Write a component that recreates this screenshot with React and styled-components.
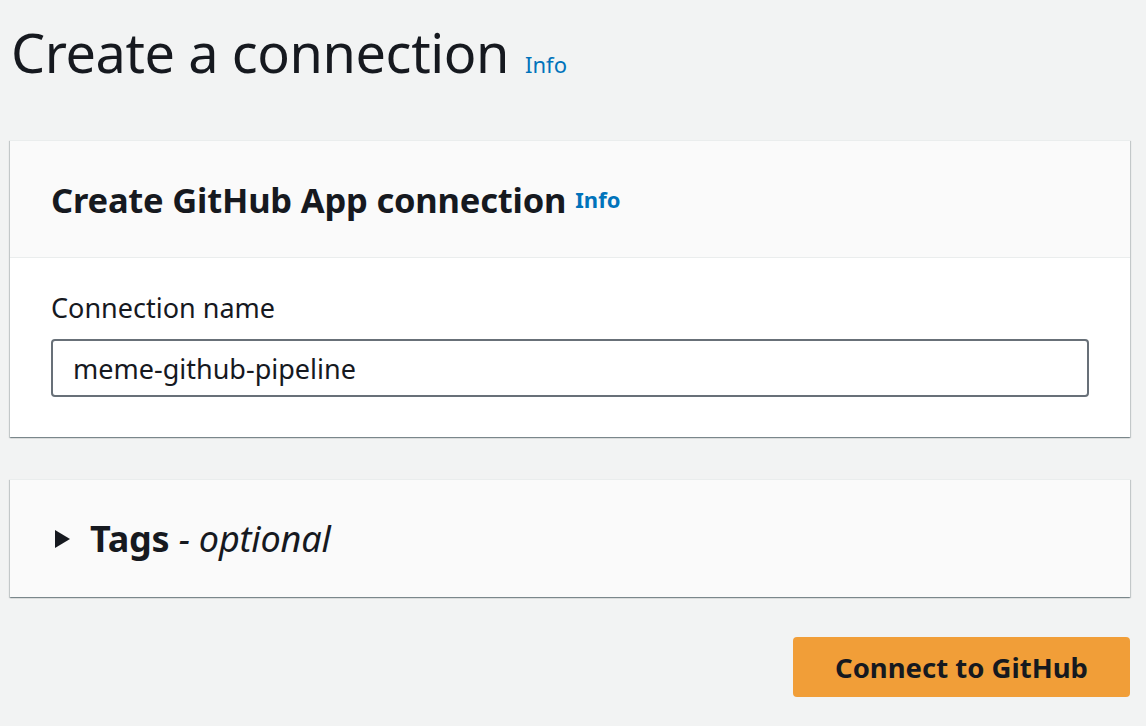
import React from "react";
import styled, { createGlobalStyle } from "styled-components";

const GlobalStyle = createGlobalStyle`
  html, body {
    margin: 0;
    padding: 0;
    background: #f2f3f3;
    font-family: "Noto Sans", "Open Sans", sans-serif;
    color: #16191f;
  }
`;

const Page = styled.div`
  width: 1146px;
  height: 726px;
  box-sizing: border-box;
  padding: 14px 16px 0 10px;
  overflow: hidden;
`;

const PageHeader = styled.div`
  display: flex;
  align-items: baseline;
  gap: 16px;
  padding-left: 1px;
  height: 126px;
`;

const Title = styled.h1`
  margin: 0;
  font-size: 54px;
  font-weight: 400;
  line-height: 76px;
  letter-spacing: -0.4px;
`;

const InfoLink = styled.a`
  color: #0073bb;
  font-size: ${(p) => p.size || 22}px;
  font-weight: ${(p) => (p.bold ? 700 : 400)};
  text-decoration: none;
`;

const Card = styled.section`
  background: #ffffff;
  box-shadow: 0 1px 1px 0 rgba(0, 28, 36, 0.3), 1px 1px 1px 0 rgba(0, 28, 36, 0.15),
    -1px 1px 1px 0 rgba(0, 28, 36, 0.15);
  border-top: 1px solid #eaeded;
  margin-bottom: ${(p) => p.gap || 42}px;
`;

const CardHeader = styled.div`
  background: #fafafa;
  border-bottom: ${(p) => (p.last ? "none" : "1px solid #eaeded")};
  height: 117px;
  box-sizing: border-box;
  padding: 0 41px;
  display: flex;
  align-items: center;
  gap: 9px;
`;

const CardTitle = styled.h2`
  margin: 0;
  font-size: ${(p) => p.size || 34.5}px;
  font-weight: 700;
  letter-spacing: -0.2px;
`;

const CardBody = styled.div`
  padding: 32px 41px 40px;
`;

const Label = styled.label`
  display: block;
  font-size: 27px;
  line-height: 36px;
  margin-bottom: 13px;
`;

const Input = styled.input`
  width: 100%;
  box-sizing: border-box;
  height: 58px;
  border: 2px solid #687078;
  border-radius: 4px;
  padding: 0 20px;
  font-family: inherit;
  font-size: 27px;
  color: #16191f;
  background: #fff;
  outline: none;
`;

const Triangle = styled.span`
  width: 0;
  height: 0;
  border-top: 9px solid transparent;
  border-bottom: 9px solid transparent;
  border-left: 15px solid #16191f;
  margin: 0 11px 0 4px;
`;

const Optional = styled.span`
  font-weight: 400;
  font-style: italic;
`;

const Actions = styled.div`
  display: flex;
  justify-content: flex-end;
`;

const PrimaryButton = styled.button`
  background: #f19e38;
  border: none;
  border-radius: 4px;
  width: 337px;
  height: 60px;
  font-family: inherit;
  font-size: 27.5px;
  font-weight: 700;
  color: #16191f;
  cursor: pointer;
`;

export default function App() {
  return (
    <>
      <GlobalStyle />
      <Page>
        <PageHeader>
          <Title>Create a connection</Title>
          <InfoLink href="#">Info</InfoLink>
        </PageHeader>

        <Card gap={42}>
          <CardHeader>
            <CardTitle>Create GitHub App connection</CardTitle>
            <InfoLink href="#" bold size={22}>
              Info
            </InfoLink>
          </CardHeader>
          <CardBody>
            <Label htmlFor="conn-name">Connection name</Label>
            <Input id="conn-name" defaultValue="meme-github-pipeline" />
          </CardBody>
        </Card>

        <Card gap={40}>
          <CardHeader last>
            <Triangle />
            <CardTitle size={36}>
              Tags <Optional>- optional</Optional>
            </CardTitle>
          </CardHeader>
        </Card>

        <Actions>
          <PrimaryButton>Connect to GitHub</PrimaryButton>
        </Actions>
      </Page>
    </>
  );
}
